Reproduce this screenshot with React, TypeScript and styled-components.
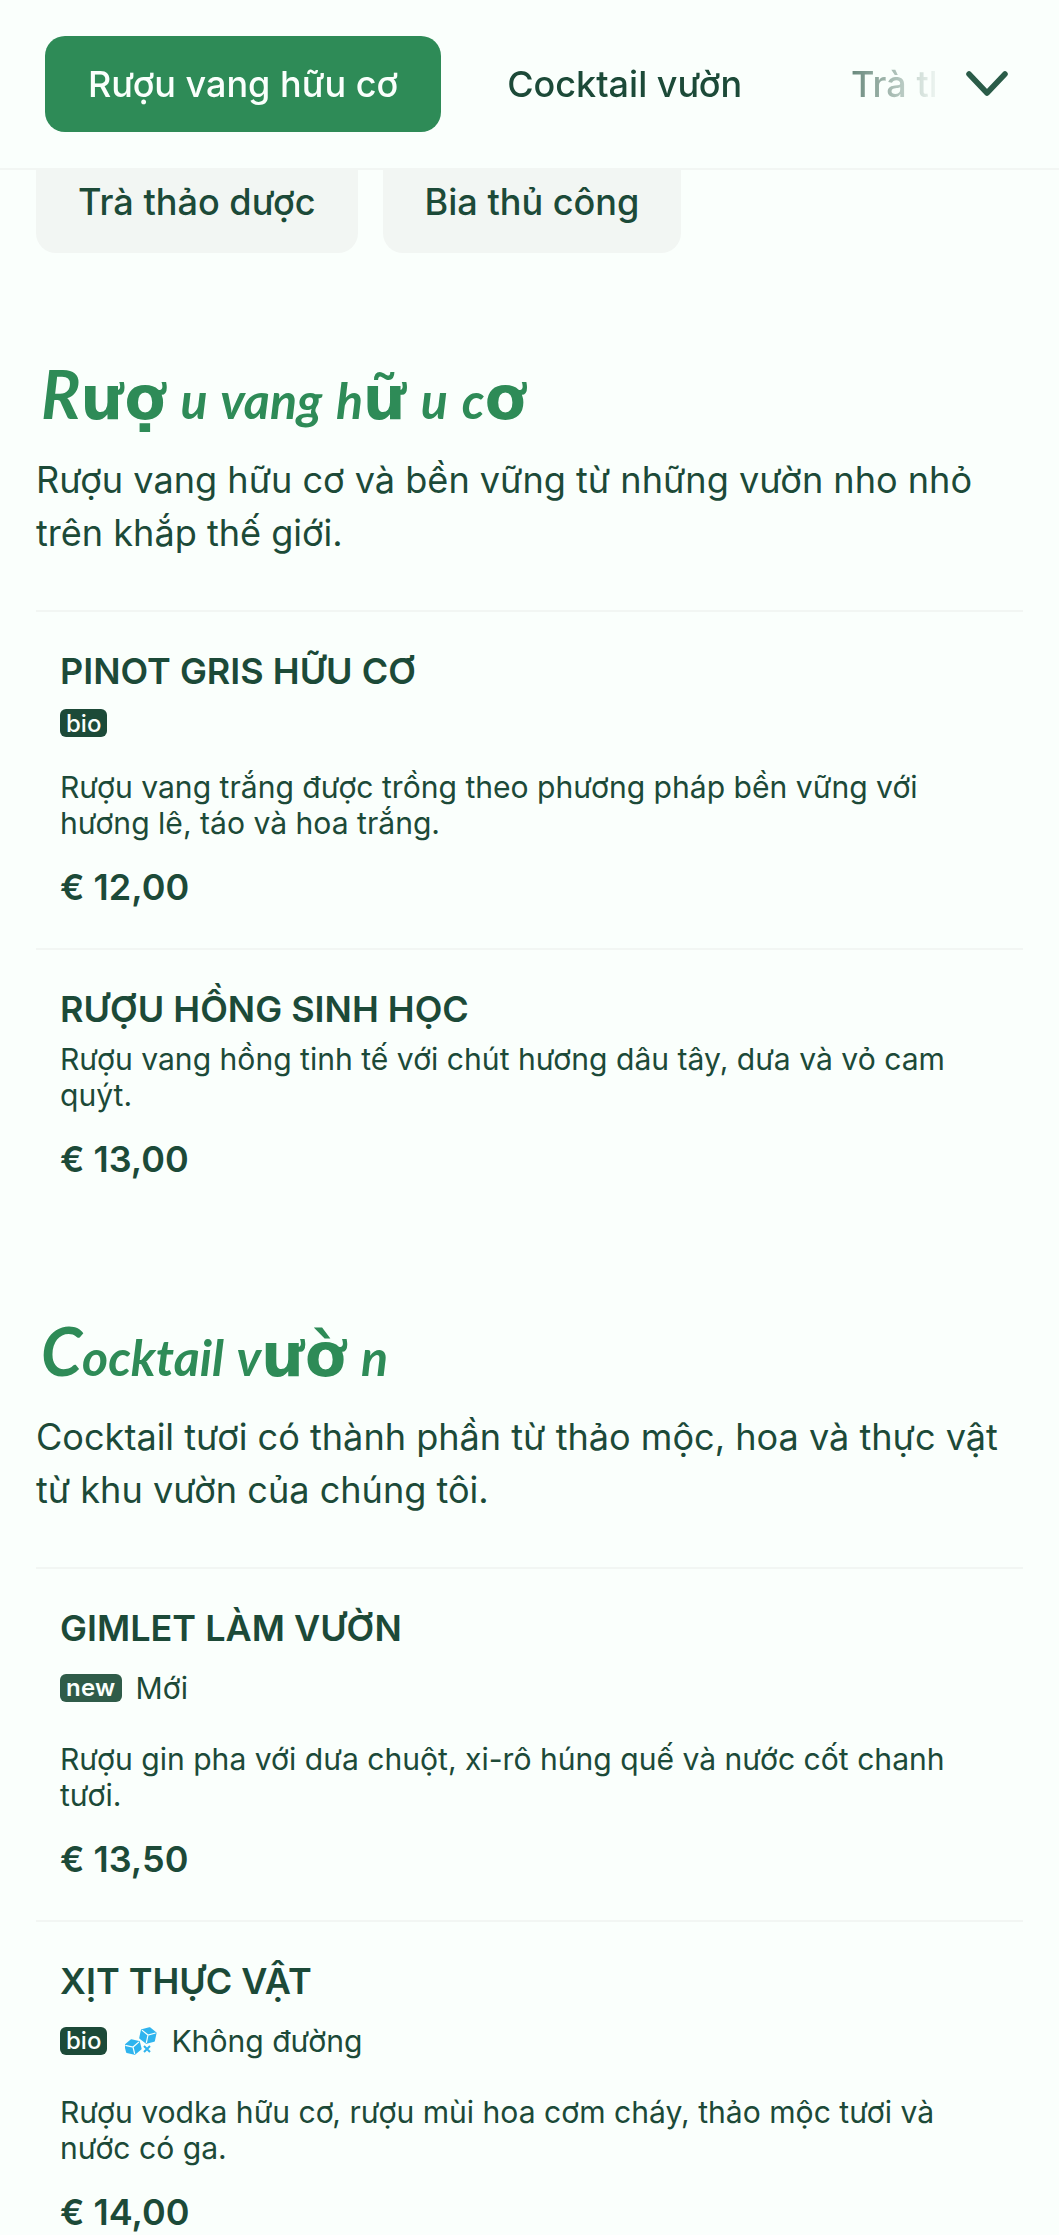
import React from 'react';
import styled, { createGlobalStyle } from 'styled-components';

const GlobalStyle = createGlobalStyle`
  html, body {
    margin: 0;
    padding: 0;
    background: #fafffc;
  }
  body {
    font-family: Inter, "Noto Sans", sans-serif;
    color: #1c4a38;
  }
`;

const Page = styled.div`
  width: 1059px;
  height: 2235px;
  overflow: hidden;
  background: #fafffc;
`;

const Header = styled.header`
  position: relative;
  z-index: 1;
  height: 170px;
  box-sizing: border-box;
  padding: 36px 0 0 45px;
  display: flex;
  align-items: flex-start;
  background: #fafffc;
  border-bottom: 2px solid #f2f6f3;
`;

const TabScroller = styled.nav`
  width: 890px;
  display: flex;
  gap: 23px;
  overflow: hidden;
  mask-image: linear-gradient(to right, #000 757px, transparent 899px);
`;

const Tab = styled.div<{ $active?: boolean }>`
  flex: none;
  height: 96px;
  padding: 0 43px;
  display: flex;
  align-items: center;
  border-radius: 20px;
  font-size: 36px;
  font-weight: 500;
  white-space: nowrap;
  background: ${(p) => (p.$active ? '#2e8b57' : 'transparent')};
  color: ${(p) => (p.$active ? '#fafffc' : '#1c4a38')};
`;

const ChevronButton = styled.div`
  flex: none;
  width: 44px;
  height: 96px;
  margin-left: 30px;
  display: flex;
  align-items: center;
  justify-content: center;
  color: #2a5c48;
`;

const Chips = styled.div`
  margin-top: -19px;
  padding: 0 36px;
  display: flex;
  gap: 25px;
`;

const Chip = styled.div`
  height: 102px;
  padding: 0 42px;
  display: flex;
  align-items: center;
  border-radius: 20px;
  background: #f2f6f3;
  font-size: 36.1px;
  font-weight: 500;
`;

const Section = styled.section<{ $top: number }>`
  margin: ${(p) => p.$top}px 36px 0;
`;

const SectionTitle = styled.h2`
  margin: 0;
  height: 88px;
  padding-left: 5px;
  color: #2e8b57;
  font-size: 50px;
  line-height: 80px;
  font-weight: 400;
  white-space: pre;
`;

const Script = styled.span<{ $cap?: boolean }>`
  font-family: Lato, sans-serif;
  font-style: italic;
  font-weight: 700;
  font-size: ${(p) => (p.$cap ? 66 : 50)}px;
  word-spacing: 3px;
`;

const Fallback = styled.span`
  font-family: "DejaVu Sans", sans-serif;
  font-size: 60px;
  font-weight: 700;
  letter-spacing: 1px;
`;

const Intro = styled.p`
  margin: 12px 0 0;
  padding-bottom: 50px;
  border-bottom: 2px solid #f2f6f3;
  font-size: 36.1px;
  line-height: 53px;
`;

const Item = styled.article<{ $last?: boolean }>`
  padding: 34px 24px 0;
  border-bottom: ${(p) => (p.$last ? 'none' : '2px solid #f2f6f3')};
`;

const ItemName = styled.h3`
  margin: 0;
  font-size: 36px;
  line-height: 50px;
  font-weight: 600;
`;

const TagRow = styled.div<{ $labelled?: boolean }>`
  margin-top: 5px;
  height: ${(p) => (p.$labelled ? 59 : 44)}px;
  display: flex;
  align-items: center;
  gap: 14px;
  font-size: 30.1px;
`;

const Tag = styled.span<{ $new?: boolean }>`
  height: 28px;
  padding: 0 6px;
  margin-right: ${(p) => (p.$new ? 0 : 4)}px;
  display: inline-flex;
  align-items: center;
  border-radius: 6px;
  background: ${(p) => (p.$new ? '#2f5c49' : '#1c4a38')};
  color: #fafffc;
  font-size: 24px;
  font-weight: ${(p) => (p.$new ? 600 : 500)};
  letter-spacing: ${(p) => (p.$new ? 0.3 : 0)}px;
`;

const Description = styled.p<{ $gap: number }>`
  margin: ${(p) => p.$gap}px 0 0;
  padding-right: 40px;
  font-size: 30.1px;
  line-height: 36px;
`;

const Price = styled.div`
  margin-top: 21px;
  padding-bottom: 36px;
  font-size: 36px;
  line-height: 50px;
  font-weight: 600;
`;

const Chevron = () => (
  <svg width="44" height="30" viewBox="0 0 44 30" fill="none" stroke="currentColor" strokeWidth="5.5" strokeLinecap="round" strokeLinejoin="round">
    <polyline points="4,5 22,24 40,5" />
  </svg>
);

// two ice cubes and a small cross
const SugarFreeIcon = () => (
  <svg width="32" height="30" viewBox="0 0 32 30">
    <g transform="rotate(12 23 9)">
      <path d="M23 2l7 3.5v8L23 17l-7-3.5v-8z" fill="#2fb4ee" stroke="#2fb4ee" strokeWidth="2" strokeLinejoin="round" />
      <path d="M16 5.5l7 3.5 7-3.5M23 9v8" fill="none" stroke="#fafffc" strokeWidth="1.2" />
    </g>
    <g transform="rotate(-14 8 21)">
      <path d="M8 14l7 3.5v7L8 28l-7-3.5v-7z" fill="#2fb4ee" stroke="#2fb4ee" strokeWidth="2" strokeLinejoin="round" />
      <path d="M1 17.5L8 21l7-3.5M8 21v7" fill="none" stroke="#fafffc" strokeWidth="1.2" />
    </g>
    <path d="M19 20l6 6M25 20l-6 6" stroke="#2fb4ee" strokeWidth="2" />
  </svg>
);

const App = () => (
  <Page>
    <GlobalStyle />
    <Header>
      <TabScroller>
        <Tab $active>Rượu vang hữu cơ</Tab>
        <Tab>Cocktail vườn</Tab>
        <Tab>Trà thảo dược</Tab>
      </TabScroller>
      <ChevronButton>
        <Chevron />
      </ChevronButton>
    </Header>
    <Chips>
      <Chip>Trà thảo dược</Chip>
      <Chip>Bia thủ công</Chip>
    </Chips>

    <Section $top={101}>
      <SectionTitle>
        <Script $cap>R</Script>
        <Fallback>ượ</Fallback>
        <Script> u vang h</Script>
        <Fallback>ữ</Fallback>
        <Script> u c</Script>
        <Fallback>ơ</Fallback>
      </SectionTitle>
      <Intro>Rượu vang hữu cơ và bền vững từ những vườn nho nhỏ trên khắp thế giới.</Intro>
      <Item>
        <ItemName>PINOT GRIS HỮU CƠ</ItemName>
        <TagRow>
          <Tag>bio</Tag>
        </TagRow>
        <Description $gap={24}>Rượu vang trắng được trồng theo phương pháp bền vững với hương lê, táo và hoa trắng.</Description>
        <Price>€ 12,00</Price>
      </Item>
      <Item $last>
        <ItemName>RƯỢU HỒNG SINH HỌC</ItemName>
        <Description $gap={7}>Rượu vang hồng tinh tế với chút hương dâu tây, dưa và vỏ cam quýt.</Description>
        <Price>€ 13,00</Price>
      </Item>
    </Section>

    <Section $top={91}>
      <SectionTitle>
        <Script $cap>C</Script>
        <Script>ocktail v</Script>
        <Fallback>ườ</Fallback>
        <Script> n</Script>
      </SectionTitle>
      <Intro>Cocktail tươi có thành phần từ thảo mộc, hoa và thực vật từ khu vườn của chúng tôi.</Intro>
      <Item>
        <ItemName>GIMLET LÀM VƯỜN</ItemName>
        <TagRow $labelled>
          <Tag $new>new</Tag>
          Mới
        </TagRow>
        <Description $gap={24}>Rượu gin pha với dưa chuột, xi-rô húng quế và nước cốt chanh tươi.</Description>
        <Price>€ 13,50</Price>
      </Item>
      <Item $last>
        <ItemName>XỊT THỰC VẬT</ItemName>
        <TagRow $labelled>
          <Tag>bio</Tag>
          <SugarFreeIcon />
          Không đường
        </TagRow>
        <Description $gap={24}>Rượu vodka hữu cơ, rượu mùi hoa cơm cháy, thảo mộc tươi và nước có ga.</Description>
        <Price>€ 14,00</Price>
      </Item>
    </Section>
  </Page>
);

export default App;
